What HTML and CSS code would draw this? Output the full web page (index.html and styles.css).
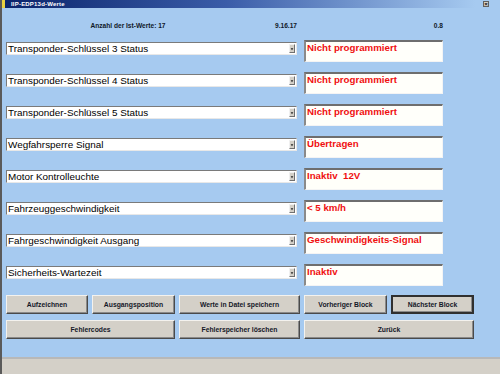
FILE: index.html
```html
<!DOCTYPE html>
<html lang="de">
<head>
    <meta charset="UTF-8">
    <title>IIP-EDP13d-Werte</title>
    <link rel="stylesheet" href="styles.css">
</head>
<body>
    <div class="window">
        <div class="titlebar">
            <span class="app-icon"></span>
            <span class="title">IIP-EDP13d-Werte</span>
            <span class="close">&times;</span>
        </div>

        <div class="main">
            <div class="info">
                <span class="count">Anzahl der Ist-Werte: 17</span>
                <span class="date">9.16.17</span>
                <span class="ver">0.8</span>
            </div>

            <div class="rows">
                <div class="select"><span>Transponder-Schlüssel 3 Status</span><i class="arrow"><svg width="6" height="8" viewBox="0 0 6 8"><path d="M1 3h4L3 6z" fill="#222"/></svg></i></div>
                <div class="value">Nicht programmiert</div>

                <div class="select"><span>Transponder-Schlüssel 4 Status</span><i class="arrow"><svg width="6" height="8" viewBox="0 0 6 8"><path d="M1 3h4L3 6z" fill="#222"/></svg></i></div>
                <div class="value">Nicht programmiert</div>

                <div class="select"><span>Transponder-Schlüssel 5 Status</span><i class="arrow"><svg width="6" height="8" viewBox="0 0 6 8"><path d="M1 3h4L3 6z" fill="#222"/></svg></i></div>
                <div class="value">Nicht programmiert</div>

                <div class="select"><span>Wegfahrsperre Signal</span><i class="arrow"><svg width="6" height="8" viewBox="0 0 6 8"><path d="M1 3h4L3 6z" fill="#222"/></svg></i></div>
                <div class="value">Übertragen</div>

                <div class="select"><span>Motor Kontrolleuchte</span><i class="arrow"><svg width="6" height="8" viewBox="0 0 6 8"><path d="M1 3h4L3 6z" fill="#222"/></svg></i></div>
                <div class="value">Inaktiv&nbsp;&nbsp;12V</div>

                <div class="select"><span>Fahrzeuggeschwindigkeit</span><i class="arrow"><svg width="6" height="8" viewBox="0 0 6 8"><path d="M1 3h4L3 6z" fill="#222"/></svg></i></div>
                <div class="value">&lt; 5 km/h</div>

                <div class="select"><span>Fahrgeschwindigkeit Ausgang</span><i class="arrow"><svg width="6" height="8" viewBox="0 0 6 8"><path d="M1 3h4L3 6z" fill="#222"/></svg></i></div>
                <div class="value">Geschwindigkeits-Signal</div>

                <div class="select"><span>Sicherheits-Wartezeit</span><i class="arrow"><svg width="6" height="8" viewBox="0 0 6 8"><path d="M1 3h4L3 6z" fill="#222"/></svg></i></div>
                <div class="value">Inaktiv</div>
            </div>

            <div class="buttons">
                <button>Aufzeichnen</button>
                <button>Ausgangsposition</button>
                <button>Werte in Datei speichern</button>
                <button>Vorheriger Block</button>
                <button class="default">Nächster Block</button>
                <button class="wide">Fehlercodes</button>
                <button>Fehlerspeicher löschen</button>
                <button class="wide">Zurück</button>
            </div>
        </div>

        <div class="statusbar"></div>
    </div>
</body>
</html>
```

FILE: styles.css
```css
body {
    margin: 0;
    font-family: "Liberation Sans", Arial, sans-serif;
    background-color: #a6caf0;
}
.window {
    height: 374px;
    display: flex;
    flex-direction: column;
    border-left: 2px solid #5a5a5a;
    box-sizing: border-box;
    overflow: hidden;
}
.titlebar {
    height: 8px;
    display: flex;
    align-items: center;
    background: linear-gradient(to right, #0a246a, #3a5ca8 45%, #a6caf0 95%);
    color: white;
    font-size: 6px;
    font-weight: bold;
}
.app-icon {
    flex: none;
    width: 3px;
    height: 8px;
    background-color: #e8d040;
    margin-right: 6px;
}
.title {
    flex: 1;
    letter-spacing: 0.2px;
}
.close {
    flex: none;
    width: 6px;
    height: 6px;
    margin-right: 11px;
    background-color: #d4d0c8;
    color: #000;
    font-size: 6px;
    line-height: 5px;
    text-align: center;
    border: 1px solid #606060;
    box-sizing: border-box;
    overflow: hidden;
}
.main {
    flex: 1;
    padding-left: 4px;
}
.info {
    height: 32px;
    display: grid;
    grid-template-columns: 244px 47px 146px;
    align-items: center;
    padding-top: 3px;
    box-sizing: border-box;
    font-size: 6.6px;
    font-weight: bold;
    color: #101828;
}
.count {
    text-align: center;
}
.date,
.ver {
    text-align: right;
}
.rows {
    display: grid;
    grid-template-columns: 291px 139px;
    grid-auto-rows: 22px;
    column-gap: 7px;
    row-gap: 10px;
}
.select {
    margin-top: 2px;
    height: 13px;
    display: flex;
    align-items: center;
    background-color: #fff;
    border: 1px solid;
    border-color: #7a7a7a #e8e8e8 #e8e8e8 #7a7a7a;
    box-sizing: border-box;
    font-size: 9.9px;
    color: #000;
}
.select span {
    flex: 1;
    padding-left: 1px;
    white-space: nowrap;
}
.arrow {
    width: 6px;
    height: 9px;
    margin-right: 1px;
    display: flex;
    align-items: center;
    justify-content: center;
    background-color: #d4d0c8;
    border: 1px solid;
    border-color: #f0f0f0 #707070 #707070 #f0f0f0;
    box-sizing: border-box;
}
.value {
    background-color: #fffffa;
    border-top: 2px solid #6e6e6e;
    border-left: 2px solid #8a8a8a;
    border-right: 1px solid #f4f4f4;
    border-bottom: 1px solid #f4f4f4;
    box-sizing: border-box;
    padding-left: 1px;
    font-size: 9.7px;
    font-weight: bold;
    color: #f01010;
    line-height: 12px;
    white-space: nowrap;
}
.buttons {
    margin-top: 9px;
    display: grid;
    grid-template-columns: 82px 83px 121px 83px 83px;
    grid-auto-rows: 19px;
    column-gap: 4px;
    row-gap: 6px;
}
.buttons button {
    font-family: "Liberation Sans", Arial, sans-serif;
    font-size: 6.8px;
    font-weight: bold;
    color: #141828;
    background-color: #d4d0c8;
    border: 1px solid;
    border-color: #f4f2ee #4a4a4a #4a4a4a #f4f2ee;
    box-shadow: inset -1px -1px 0 #8a8a8a;
    padding: 0;
}
.buttons .wide {
    grid-column: span 2;
}
.buttons .default {
    border: 2px solid #303030;
}
.statusbar {
    height: 15px;
    background-color: #d4d0c8;
    border-top: 2px solid #b8b8b8;
}
```
